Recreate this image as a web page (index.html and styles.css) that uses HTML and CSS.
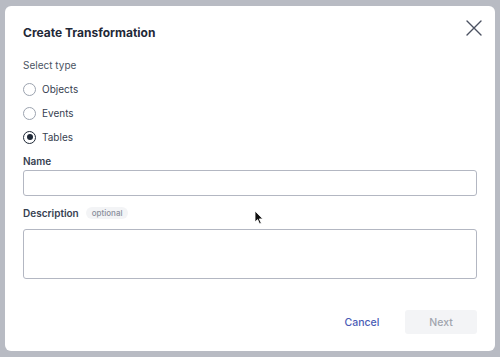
FILE: index.html
```html
<!DOCTYPE html>
<html lang="en">
<head>
    <meta charset="UTF-8">
    <meta name="viewport" content="width=device-width, initial-scale=1.0">
    <title>Create Transformation</title>
    <link rel="stylesheet" href="styles.css">
</head>
<body>
    <div class="modal">
        <div class="modal-header">
            <h1>Create Transformation</h1>
            <button class="close-btn" aria-label="Close">
                <svg width="16" height="16" viewBox="0 0 16 16" fill="none" stroke="#4b5161" stroke-width="1.4" stroke-linecap="round">
                    <path d="M1 1 L15 15 M15 1 L1 15"/>
                </svg>
            </button>
        </div>

        <div class="section-label">Select type</div>
        <div class="radio-group">
            <label class="radio-row"><input type="radio" name="type" value="objects"><span>Objects</span></label>
            <label class="radio-row"><input type="radio" name="type" value="events"><span>Events</span></label>
            <label class="radio-row"><input type="radio" name="type" value="tables" checked><span>Tables</span></label>
        </div>

        <label class="field-label" for="name">Name</label>
        <input class="text-input" type="text" id="name">

        <div class="field-label desc-label">
            <label for="description">Description</label>
            <span class="badge">optional</span>
        </div>
        <textarea class="text-area" id="description"></textarea>

        <div class="modal-footer">
            <button class="btn btn-cancel">Cancel</button>
            <button class="btn btn-next" disabled>Next</button>
        </div>
    </div>

    <svg class="cursor" width="10" height="15" viewBox="0 0 10 15">
        <path d="M1 1 L1 12 L3.6 9.6 L5.6 14 L7.3 13.2 L5.3 8.9 L8.8 8.9 Z" fill="#111" stroke="#fff" stroke-width="0.8"/>
    </svg>
</body>
</html>
```

FILE: styles.css
```css
body {
    margin: 0;
    width: 500px;
    height: 357px;
    background-color: #b8bbc3;
    font-family: Inter, 'Noto Sans', sans-serif;
    color: #374151;
    overflow: hidden;
}

.modal {
    margin: 6px 5px;
    width: 490px;
    height: 345px;
    box-sizing: border-box;
    padding: 14px 18px 17px 18px;
    background-color: #fff;
    border-radius: 6px;
    display: flex;
    flex-direction: column;
}

.modal-header {
    display: flex;
    justify-content: space-between;
    align-items: flex-start;
    margin-right: -5px;
}

h1 {
    margin: 4px 0 0 0;
    font-size: 12px;
    line-height: 18px;
    font-weight: 700;
    color: #1f2937;
}

.close-btn {
    border: none;
    background: transparent;
    padding: 0;
    width: 16px;
    height: 16px;
    cursor: pointer;
}

.close-btn svg {
    display: block;
}

.section-label {
    margin-top: 15px;
    font-size: 10px;
    line-height: 16px;
    color: #4b5563;
}

.radio-group {
    display: flex;
    flex-direction: column;
    gap: 8px;
    margin-top: 8px;
}

.radio-row {
    display: flex;
    align-items: center;
    gap: 6px;
    font-size: 10px;
    line-height: 16px;
    color: #374151;
}

.radio-row input {
    appearance: none;
    margin: 0;
    width: 13px;
    height: 13px;
    border: 1px solid #9ca3af;
    border-radius: 50%;
    background: #fff;
    display: grid;
    place-items: center;
}

.radio-row input:checked {
    border: 1.5px solid #1f2937;
}

.radio-row input:checked::after {
    content: "";
    width: 6px;
    height: 6px;
    border-radius: 50%;
    background: #1f2937;
}

.field-label {
    margin-top: 8px;
    font-size: 10px;
    line-height: 16px;
    font-weight: 600;
    color: #374151;
}

.desc-label {
    margin-top: 9px;
    display: flex;
    align-items: center;
    gap: 7px;
}

.badge {
    font-size: 8px;
    font-weight: 500;
    line-height: 12px;
    padding: 0 6px;
    border-radius: 6px;
    background-color: #f3f4f6;
    color: #8a8f9c;
}

.text-input, .text-area {
    width: 100%;
    box-sizing: border-box;
    border: 1px solid #b3b7c2;
    border-radius: 3px;
    background: #fff;
    font-family: inherit;
    font-size: 11px;
    padding: 4px 8px;
}

.text-input {
    margin-top: 1px;
    height: 26px;
}

.text-area {
    margin-top: 8px;
    height: 50px;
    resize: none;
}

.modal-footer {
    margin-top: auto;
    display: flex;
    justify-content: flex-end;
    gap: 7px;
}

.btn {
    width: 72px;
    height: 24px;
    border: none;
    border-radius: 3px;
    font-family: inherit;
    font-size: 10.5px;
    font-weight: 500;
    cursor: pointer;
}

.btn-cancel {
    background: transparent;
    color: #4a5bb5;
}

.btn-next {
    background-color: #f3f4f6;
    color: #a1a5ae;
    cursor: default;
}

.cursor {
    position: absolute;
    left: 254px;
    top: 210px;
}
```
